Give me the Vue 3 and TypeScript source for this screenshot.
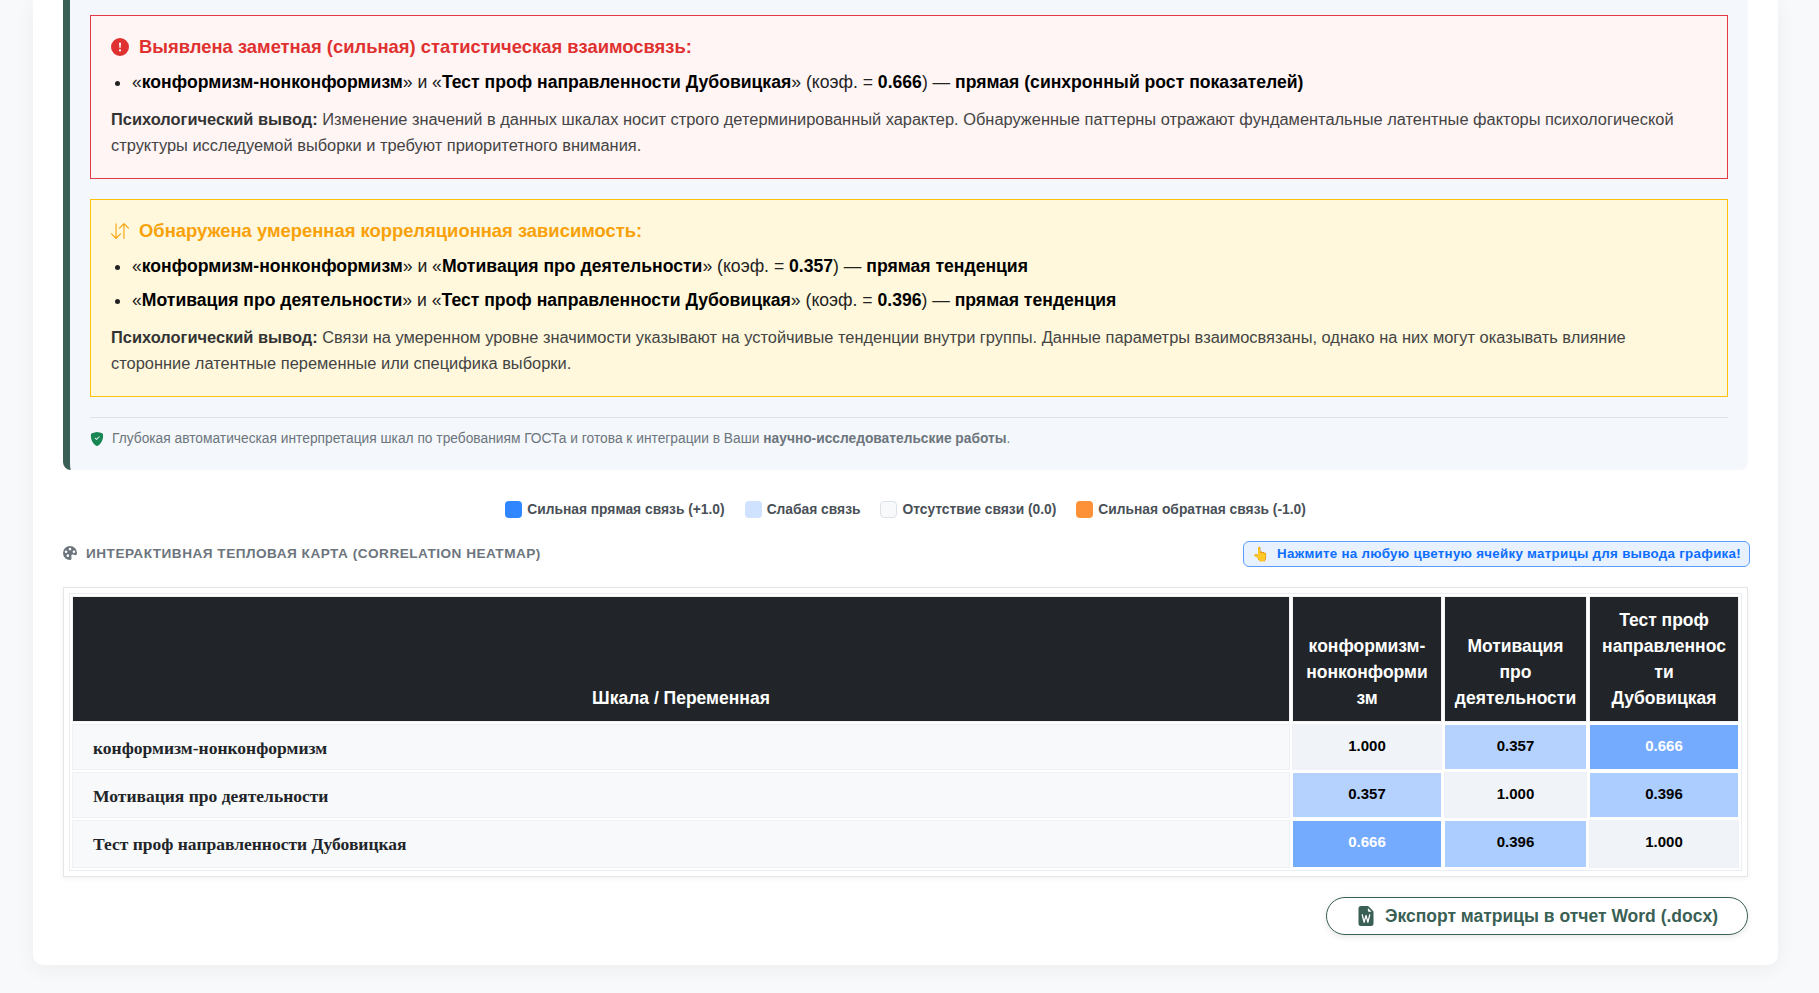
<script setup lang="ts">
interface Cell { v: string; cls: string }
const vars = ['конформизм-нонконформизм', 'Мотивация про деятельности', 'Тест проф направленности Дубовицкая']
const rows: { name: string; cells: Cell[] }[] = [
  { name: vars[0], cells: [{ v: '1.000', cls: 'self' }, { v: '0.357', cls: 'c357' }, { v: '0.666', cls: 'c666' }] },
  { name: vars[1], cells: [{ v: '0.357', cls: 'c357' }, { v: '1.000', cls: 'self' }, { v: '0.396', cls: 'c396' }] },
  { name: vars[2], cells: [{ v: '0.666', cls: 'c666' }, { v: '0.396', cls: 'c396' }, { v: '1.000', cls: 'self' }] },
]
const legend = [
  { label: 'Сильная прямая связь (+1.0)', cls: 's-strong' },
  { label: 'Слабая связь', cls: 's-weak' },
  { label: 'Отсутствие связи (0.0)', cls: 's-none' },
  { label: 'Сильная обратная связь (-1.0)', cls: 's-neg' },
]
</script>

<template>
  <div class="page">
    <main class="card">
      <section class="panel">
        <div class="box red">
          <h4 class="head red-t">
            <svg class="ic" viewBox="0 0 16 16" fill="currentColor"><path d="M16 8A8 8 0 1 1 0 8a8 8 0 0 1 16 0M8 4a.905.905 0 0 0-.9.995l.35 3.507a.552.552 0 0 0 1.1 0l.35-3.507A.905.905 0 0 0 8 4m.002 6a1 1 0 1 0 0 2 1 1 0 0 0 0-2"/></svg>
            Выявлена заметная (сильная) статистическая взаимосвязь:
          </h4>
          <ul>
            <li>«<b>конформизм-нонконформизм</b>» и «<b>Тест проф направленности Дубовицкая</b>» (коэф. = <b>0.666</b>) — <b>прямая (синхронный рост показателей)</b></li>
          </ul>
          <p><b>Психологический вывод:</b> Изменение значений в данных шкалах носит строго детерминированный характер. Обнаруженные паттерны отражают фундаментальные латентные факторы психологической структуры исследуемой выборки и требуют приоритетного внимания.</p>
        </div>
        <div class="box yellow">
          <h4 class="head yel-t">
            <svg class="ic" viewBox="0 0 16 16" fill="currentColor"><path fill-rule="evenodd" d="M11.5 15a.5.5 0 0 0 .5-.5V2.707l3.146 3.147a.5.5 0 0 0 .708-.708l-4-4a.5.5 0 0 0-.708 0l-4 4a.5.5 0 1 0 .708.708L11 2.707V14.5a.5.5 0 0 0 .5.5m-7-14a.5.5 0 0 1 .5.5v11.793l3.146-3.147a.5.5 0 0 1 .708.708l-4 4a.5.5 0 0 1-.708 0l-4-4a.5.5 0 0 1 .708-.708L4 13.293V1.5a.5.5 0 0 1 .5-.5"/></svg>
            Обнаружена умеренная корреляционная зависимость:
          </h4>
          <ul>
            <li>«<b>конформизм-нонконформизм</b>» и «<b>Мотивация про деятельности</b>» (коэф. = <b>0.357</b>) — <b>прямая тенденция</b></li>
            <li>«<b>Мотивация про деятельности</b>» и «<b>Тест проф направленности Дубовицкая</b>» (коэф. = <b>0.396</b>) — <b>прямая тенденция</b></li>
          </ul>
          <p><b>Психологический вывод:</b> Связи на умеренном уровне значимости указывают на устойчивые тенденции внутри группы. Данные параметры взаимосвязаны, однако на них могут оказывать влияние сторонние латентные переменные или специфика выборки.</p>
        </div>
        <div class="note">
          <svg class="shield" viewBox="0 0 16 16" fill="currentColor"><path d="M8 0c-.69 0-1.843.265-2.928.56-1.11.3-2.229.655-2.887.87a1.54 1.54 0 0 0-1.044 1.262c-.596 4.477.787 7.795 2.465 9.99a11.8 11.8 0 0 0 2.517 2.453c.386.273.744.482 1.048.625.28.132.581.24.829.24s.548-.108.829-.24a7 7 0 0 0 1.048-.625 11.8 11.8 0 0 0 2.517-2.453c1.678-2.195 3.061-5.513 2.465-9.99a1.54 1.54 0 0 0-1.044-1.263 63 63 0 0 0-2.887-.87C9.843.266 8.69 0 8 0m2.146 5.146a.5.5 0 0 1 .708.708l-3 3a.5.5 0 0 1-.708 0l-1.5-1.5a.5.5 0 1 1 .708-.708L7.5 7.793z"/></svg>
          <span>Глубокая автоматическая интерпретация шкал по требованиям ГОСТа и готова к интеграции в Ваши <b>научно-исследовательские работы</b>.</span>
        </div>
      </section>

      <div class="legend">
        <div v-for="l in legend" :key="l.label" class="leg-item">
          <span class="swatch" :class="l.cls"></span>{{ l.label }}
        </div>
      </div>

      <div class="title-row">
        <div class="title">
          <svg class="pal" viewBox="0 0 16 16" fill="currentColor"><path d="M12.433 10.07C14.133 10.585 16 11.15 16 8a8 8 0 1 0-8 8c1.996 0 1.826-1.504 1.649-3.08-.124-1.101-.252-2.237.351-2.92.465-.527 1.42-.237 2.433.07M8 5a1.5 1.5 0 1 1 0-3 1.5 1.5 0 0 1 0 3m4.5 3a1.5 1.5 0 1 1 0-3 1.5 1.5 0 0 1 0 3M5 6.5a1.5 1.5 0 1 1-3 0 1.5 1.5 0 0 1 3 0m.5 6a1.5 1.5 0 1 1 0-3 1.5 1.5 0 0 1 0 3"/></svg>
          Интерактивная тепловая карта (Correlation Heatmap)
        </div>
        <div class="hint"><span class="emoji">👆</span>Нажмите на любую цветную ячейку матрицы для вывода графика!</div>
      </div>

      <div class="table-wrap">
        <table>
          <colgroup>
            <col />
            <col class="w150" />
            <col class="w143" />
            <col class="w150" />
          </colgroup>
          <thead>
            <tr>
              <th>Шкала / Переменная</th>
              <th v-for="v in vars" :key="v">{{ v }}</th>
            </tr>
          </thead>
          <tbody>
            <tr v-for="r in rows" :key="r.name">
              <td class="label">{{ r.name }}</td>
              <td v-for="(c, i) in r.cells" :key="i" class="val" :class="c.cls">{{ c.v }}</td>
            </tr>
          </tbody>
        </table>
      </div>

      <div class="actions">
        <button class="export" type="button">
          <svg class="word" viewBox="0 0 16 16" fill="currentColor"><path d="M9.293 0H4a2 2 0 0 0-2 2v12a2 2 0 0 0 2 2h8a2 2 0 0 0 2-2V4.707A1 1 0 0 0 13.707 4L10 .293A1 1 0 0 0 9.293 0M9.5 3.5v-2l3 3h-2a1 1 0 0 1-1-1M5.485 6.879l1.036 4.144.997-3.655a.5.5 0 0 1 .964 0l.997 3.655 1.036-4.144a.5.5 0 0 1 .97.242l-1.5 6a.5.5 0 0 1-.967.01L8 9.402l-1.018 3.73a.5.5 0 0 1-.967-.01l-1.5-6a.5.5 0 1 1 .97-.242z"/></svg>
          Экспорт матрицы в отчет Word (.docx)
        </button>
      </div>
    </main>
  </div>
</template>

<style>
html, body { margin: 0; background: #f8f9fa; }
</style>

<style scoped>
.page {
  height: 993px;
  overflow: hidden;
  box-sizing: border-box;
  padding-left: 33px;
  font-family: "Liberation Sans", Arial, sans-serif;
  color: #212529;
}
.card {
  width: 1745px;
  box-sizing: border-box;
  height: 965px;
  padding: 0 30px;
  background: #fff;
  border-radius: 0 0 10px 10px;
  box-shadow: 0 4px 20px rgba(0, 0, 0, 0.05);
}
.panel {
  box-sizing: border-box;
  height: 470px;
  padding: 15px 20px 0;
  background: #f4f7fb;
  border-left: 7px solid #3a5f55;
  border-radius: 0 0 8px 8px;
}
.box {
  box-sizing: border-box;
  padding: 20px 20px 0;
  border: 1px solid;
}
.red { height: 164px; background: #fff5f5; border-color: #e63946; margin-bottom: 20px; }
.yellow { height: 198px; background: #fff8dc; border-color: #ffc107; }
.head {
  display: flex;
  align-items: center;
  gap: 10px;
  margin: 0 0 11px;
  height: 22px;
  font-size: 18.4px;
  font-weight: 700;
  line-height: 22px;
}
.red-t { color: #e03131; }
.yel-t { color: #f9a109; }
.ic { width: 18px; height: 18px; flex: none; }
ul { margin: 0 0 11px; padding-left: 21px; list-style: disc; color: #000; }
li { font-size: 17.6px; line-height: 26px; margin-bottom: 8px; color: #222; }
li b { color: #000; }
p { margin: 0; font-size: 16.42px; line-height: 26px; color: #444; }
p b { color: #333; }
.note {
  display: flex;
  align-items: center;
  gap: 8px;
  margin-top: 20px;
  padding-top: 12px;
  border-top: 1px solid #dee2e6;
  font-size: 13.77px;
  line-height: 18px;
  color: #6c757d;
}
.shield { width: 14px; height: 14px; color: #198754; flex: none; }

.legend {
  display: flex;
  justify-content: center;
  gap: 20px;
  padding-top: 31px;
  height: 17px;
}
.leg-item {
  display: flex;
  align-items: center;
  gap: 5px;
  font-size: 13.8px;
  font-weight: 700;
  line-height: 17px;
  color: #495057;
}
.swatch { box-sizing: border-box; width: 17px; height: 17px; border-radius: 4px; }
.s-strong { background: #2f86ff; }
.s-weak { background: #cfe2ff; }
.s-none { background: #f8f9fa; border: 1px solid #dee2e6; }
.s-neg { background: #fd9137; }

.title-row {
  display: flex;
  justify-content: space-between;
  align-items: center;
  height: 26px;
  margin-top: 23px;
}
.title {
  display: flex;
  align-items: center;
  gap: 9px;
  margin-bottom: 2px;
  font-size: 13.6px;
  font-weight: 700;
  letter-spacing: 0.5px;
  text-transform: uppercase;
  color: #6c757d;
}
.pal { width: 14px; height: 14px; flex: none; }
.hint {
  display: flex;
  align-items: center;
  box-sizing: border-box;
  height: 26px;
  margin-right: -2px;
  padding: 0 8px 1px;
  background: #e7f1ff;
  border: 1.5px solid #5b9dff;
  border-radius: 6px;
  font-size: 13.3px;
  font-weight: 700;
  letter-spacing: 0.3px;
  color: #0d6efd;
}
.emoji { margin-right: 8px; font-size: 14px; }

.table-wrap {
  box-sizing: border-box;
  margin-top: 20px;
  padding: 5px;
  background: #fff;
  border: 1px solid #e4e6e8;
  box-shadow: 0 2px 5px rgba(0, 0, 0, 0.05);
}
table {
  width: 100%;
  table-layout: fixed;
  border-collapse: separate;
  border-spacing: 2px;
  border: 1px solid #eaedf1;
}
.w150 { width: 150px; }
.w143 { width: 143px; }
th {
  padding: 10px;
  border: 1px solid #f1f1f1;
  background: #212529;
  background-clip: padding-box;
  color: #fff;
  font-size: 17.5px;
  font-weight: 700;
  line-height: 26px;
  text-align: center;
  vertical-align: bottom;
  overflow-wrap: anywhere;
}
th:nth-child(3) { padding: 10px 9px; }
td {
  height: 46px;
  box-sizing: border-box;
  border: 1px solid #eef1f6;
}
tbody tr:last-child td { height: 48px; }
.label {
  padding: 3px 20px 0;
  background: #f8f9fa;
  font-family: "Liberation Serif", "Times New Roman", serif;
  font-size: 17.5px;
  font-weight: 700;
  color: #212529;
}
tbody tr:last-child .label { padding-top: 1px; }
.val {
  text-align: center;
  font-size: 15px;
  font-weight: 700;
  color: #000;
  padding-bottom: 4px;
}
tbody tr:last-child .val { padding-bottom: 6px; }
.self { background: #f0f4f9; border-color: #eef1f6; }
.c357 { background: #b5d2ff; border-color: #fff; }
.c396 { background: #abcdff; border-color: #fff; }
.c666 { background: #75abff; border-color: #fff; color: #fff; }

.actions { display: flex; justify-content: flex-end; margin-top: 20px; }
.export {
  display: flex;
  align-items: center;
  justify-content: center;
  gap: 9px;
  box-sizing: border-box;
  width: 422px;
  height: 38px;
  background: #fff;
  border: 1px solid #3a5f55;
  border-radius: 19px;
  box-shadow: 0 2px 6px rgba(0, 0, 0, 0.1);
  color: #3a5f55;
  font-family: inherit;
  font-size: 17.5px;
  font-weight: 700;
}
.word { width: 20px; height: 20px; flex: none; }
</style>
